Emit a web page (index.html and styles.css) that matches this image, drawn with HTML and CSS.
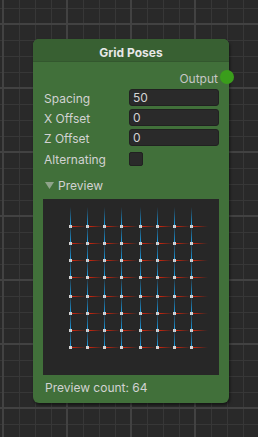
FILE: index.html
```html
<!DOCTYPE html>
<html lang="en">
<head>
  <meta charset="UTF-8" />
  <title>Grid Poses</title>
  <link rel="stylesheet" href="styles.css">
</head>
<body>
  <div class="node">
    <div class="node-header">Grid Poses</div>
    <div class="node-body">
      <div class="output-row">
        <span>Output</span>
        <span class="port"></span>
      </div>

      <div class="field">
        <label>Spacing</label>
        <div class="input">50</div>
      </div>
      <div class="field">
        <label>X Offset</label>
        <div class="input">0</div>
      </div>
      <div class="field">
        <label>Z Offset</label>
        <div class="input">0</div>
      </div>
      <div class="field check-field">
        <label>Alternating</label>
        <div class="checkbox"></div>
      </div>

      <div class="foldout">
        <svg class="arrow" width="9" height="7" viewBox="0 0 9 7"><polygon points="0,0 9,0 4.5,7" /></svg>
        <span>Preview</span>
      </div>

      <div class="preview">
        <svg width="176" height="176" viewBox="0 0 176 176" shape-rendering="crispEdges">
          <defs>
            <linearGradient id="blue" x1="0" y1="0" x2="0" y2="1">
              <stop offset="0" stop-color="#1a8fd6" stop-opacity="0" />
              <stop offset="1" stop-color="#1a9be0" stop-opacity="1" />
            </linearGradient>
            <linearGradient id="red" x1="0" y1="0" x2="1" y2="0">
              <stop offset="0" stop-color="#d9260c" stop-opacity="1" />
              <stop offset="1" stop-color="#b3200a" stop-opacity="0" />
            </linearGradient>
            <g id="pt">
              <rect x="1" y="-18" width="1" height="18" fill="url(#blue)" />
              <rect x="3" y="1" width="15" height="1" fill="url(#red)" />
              <rect x="0" y="0" width="3" height="3" fill="#d4d4d4" />
            </g>
            <g id="row">
              <use href="#pt" x="26" />
              <use href="#pt" x="43" />
              <use href="#pt" x="60" />
              <use href="#pt" x="77" />
              <use href="#pt" x="96" />
              <use href="#pt" x="113" />
              <use href="#pt" x="130" />
              <use href="#pt" x="147" />
            </g>
          </defs>
          <use href="#row" y="26" />
          <use href="#row" y="43" />
          <use href="#row" y="60" />
          <use href="#row" y="77" />
          <use href="#row" y="96" />
          <use href="#row" y="113" />
          <use href="#row" y="130" />
          <use href="#row" y="147" />
        </svg>
      </div>

      <div class="count">Preview count: 64</div>
    </div>
  </div>
</body>
</html>
```

FILE: styles.css
```css
html, body {
  height: 100%;
}
body {
  margin: 0;
  overflow: hidden;
  font-family: Inter, 'Noto Sans', sans-serif;
  font-size: 12px;
  color: #d2d2d2;
  background-color: #292929;
  background-image:
    linear-gradient(to right, #424242 0 2px, transparent 2px),
    linear-gradient(to bottom, #424242 0 2px, transparent 2px),
    linear-gradient(to right, #373737 0 1px, transparent 1px),
    linear-gradient(to bottom, #373737 0 1px, transparent 1px);
  background-size: 64px 64px, 64px 64px, 16px 16px, 16px 16px;
  background-position: 2px 0, 0 23px, 3px 0, 0 8px;
}
.node {
  position: relative;
  margin: 39px 0 0 33px;
  width: 196px;
  height: 364px;
  box-sizing: border-box;
  border-radius: 6px;
  background: #41703a;
  box-shadow: 1px 2px 3px rgba(0, 0, 0, 0.5);
}
.node-header {
  height: 22px;
  line-height: 27px;
  text-align: center;
  font-weight: bold;
  color: #e8e8e8;
  background: #386032;
  border-radius: 6px 6px 0 0;
  border-bottom: 1px solid #33572e;
}
.node-body {
  padding: 0 10px;
}
.output-row {
  height: 23px;
  margin-top: 4px;
  display: flex;
  align-items: center;
  justify-content: flex-end;
  padding-right: 1px;
  padding-top: 2px;
  box-sizing: border-box;
  color: #c6c6c6;
}
.port {
  position: absolute;
  right: -5px;
  top: 31px;
  width: 14px;
  height: 14px;
  border-radius: 50%;
  background: #3a9d1b;
}
.field {
  display: grid;
  grid-template-columns: 86px 90px;
  align-items: center;
  height: 17px;
  margin-bottom: 3px;
}
.field label {
  padding-left: 1px;
  padding-top: 1px;
}
.input {
  height: 17px;
  box-sizing: border-box;
  padding: 0 3px;
  line-height: 16px;
  background: #2a2a2a;
  border: 1px solid #212121;
  border-radius: 3px;
  color: #d4d4d4;
}
.check-field {
  height: 14px;
  margin-top: 5px;
}
.checkbox {
  width: 14px;
  height: 14px;
  box-sizing: border-box;
  background: #2a2a2a;
  border: 1px solid #212121;
  border-radius: 2px;
}
.foldout {
  display: flex;
  align-items: center;
  gap: 4px;
  height: 16px;
  margin-top: 12px;
  padding-left: 2px;
}
.arrow polygon {
  fill: #8fa48b;
}
.preview {
  margin-top: 6px;
  width: 176px;
  height: 176px;
  background: #272727;
}
.preview svg {
  display: block;
}
.count {
  margin-top: 6px;
  padding-left: 2px;
  height: 14px;
  line-height: 14px;
}
```
